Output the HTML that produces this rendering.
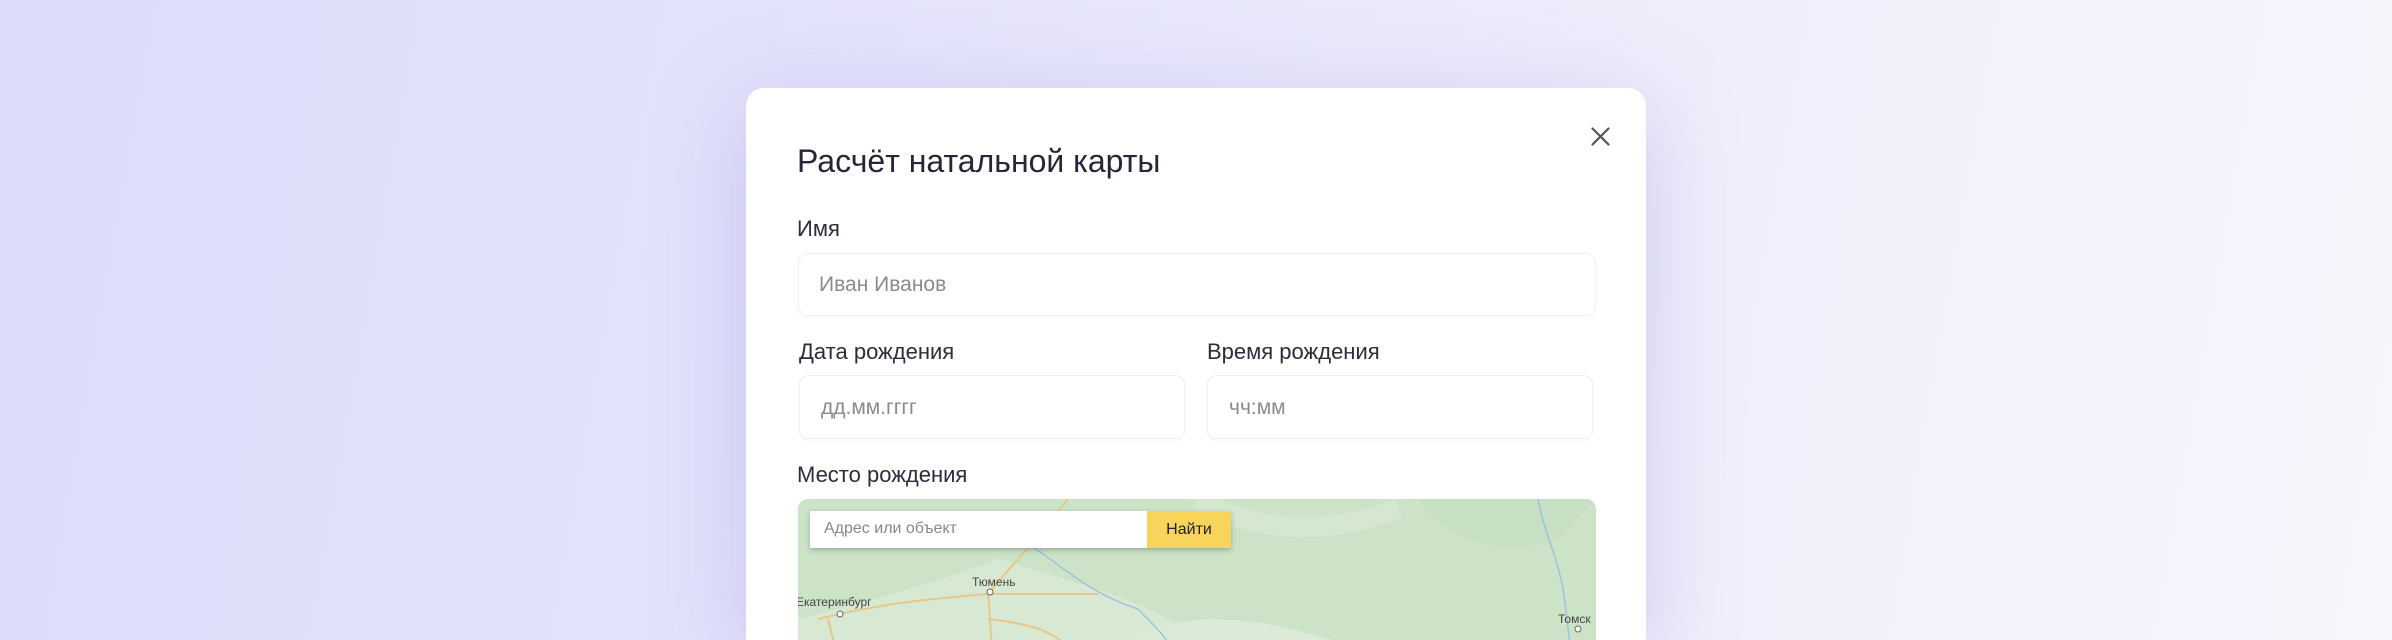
<!DOCTYPE html>
<html style="width:2392px;height:640px;overflow:hidden"><head><meta charset="utf-8"><style>
*{margin:0;padding:0;box-sizing:border-box}
body{width:2392px;height:640px;overflow:hidden;position:relative;font-family:"Liberation Sans",sans-serif;
background:linear-gradient(100deg,#dcdcfa 0%,#e4e3fb 35%,#efeefb 70%,#f6f6fc 100%);}
.modal{position:absolute;left:746px;top:88px;width:900px;height:552px;background:#fff;border-radius:18px 18px 0 0;
box-shadow:0 20px 90px rgba(140,140,220,.35)}
.t{position:absolute;color:#2c2c3c}
.in{position:absolute;border:1.5px solid #f0f0f3;border-radius:10px;background:#fff;box-shadow:0 2px 6px rgba(0,0,0,.03)}
.ph{position:absolute;color:#8a8a90;font-size:21px}
</style></head><body>
<div class="modal"></div>
<svg style="position:absolute;left:1591px;top:127px" width="19" height="19"><path d="M1.5 1.5L17.5 17.5M17.5 1.5L1.5 17.5" stroke="#555" stroke-width="2.2" stroke-linecap="round"/></svg>
<div class="t" style="left:797px;top:143px;font-size:32px;color:#262639">Расчёт натальной карты</div>
<div class="t" style="left:797px;top:216px;font-size:22px">Имя</div>
<div class="in" style="left:798px;top:253px;width:798px;height:63px"></div>
<div class="ph" style="left:819px;top:273px">Иван Иванов</div>
<div class="t" style="left:799px;top:339px;font-size:22px">Дата рождения</div>
<div class="t" style="left:1207px;top:339px;font-size:22px">Время рождения</div>
<div class="in" style="left:799px;top:375px;width:386px;height:64px"></div>
<div class="in" style="left:1207px;top:375px;width:386px;height:64px"></div>
<div class="ph" style="left:821px;top:396px">дд.мм.гггг</div>
<div class="ph" style="left:1229px;top:396px">чч:мм</div>
<div class="t" style="left:797px;top:462px;font-size:22px">Место рождения</div>
<div style="position:absolute;left:798px;top:499px;width:798px;height:141px;border-radius:10px 10px 0 0;overflow:hidden;background:#cde3c8">
<svg width="798" height="160" style="position:absolute;left:0;top:0">
<path d="M200 60 C300 90 380 110 420 160 L0 160 L0 120 C80 100 150 80 200 60Z" fill="#d8e9d3"/>
<path d="M300 160 C350 120 420 100 560 150 L600 160Z" fill="#dcebd7"/>
<path d="M620 0 C650 40 700 60 760 40 L798 0Z" fill="#c7dfc2"/>
<path d="M400 0 C450 30 520 40 600 10" stroke="#d5e7d0" stroke-width="20" fill="none"/>
<path d="M220 40 C260 60 280 90 340 110 C360 130 370 140 380 160" stroke="#9ec2e0" stroke-width="1.5" fill="none"/>
<path d="M740 0 C745 30 760 60 765 90 C770 120 770 140 775 160" stroke="#9ec2e0" stroke-width="1.5" fill="none"/>
<path d="M20 120 C80 105 130 100 190 95 L300 95 M190 95 L195 160 M190 95 C210 70 240 40 270 0 M30 120 L40 160 M190 120 C230 125 260 130 280 160" stroke="#e8c78a" stroke-width="2" fill="none"/>
<circle cx="192" cy="93" r="3" fill="#fff" stroke="#666"/><circle cx="42" cy="115" r="3" fill="#fff" stroke="#666"/><circle cx="780" cy="130" r="3" fill="#fff" stroke="#666"/>
<text x="174" y="87" font-size="12" fill="#444" font-family="Liberation Sans">Тюмень</text>
<text x="-2" y="107" font-size="12" fill="#444" font-family="Liberation Sans">Екатеринбург</text>
<text x="760" y="124" font-size="12" fill="#444" font-family="Liberation Sans">Томск</text>
</svg>
<div style="position:absolute;left:12px;top:12px;width:421px;height:37px;background:#fff;box-shadow:0 2px 5px rgba(0,0,0,.25)">
<span style="position:absolute;left:14px;top:9px;font-size:16px;color:#888">Адрес или объект</span>
<div style="position:absolute;right:0;top:0;width:84px;height:37px;background:#f8d45a;font-size:16px;color:#222;text-align:center;line-height:37px">Найти</div>
</div></div>
</body></html>
